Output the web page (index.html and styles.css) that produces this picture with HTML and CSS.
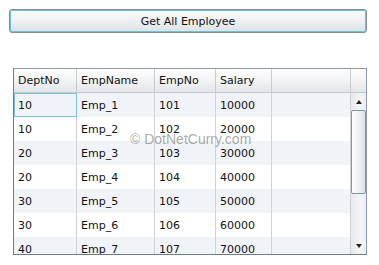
FILE: index.html
```html
<!DOCTYPE html>
<html>
	<head>
		<meta charset="utf-8" />
		<title>Employees</title>
		<link rel="stylesheet" href="styles.css">
	</head>
	<body>
		<div class="page">
			<button type="button" class="btnGet">Get All Employee</button>
			<div class="grid">
				<div class="head">
					<div class="hcell">DeptNo</div>
					<div class="hcell">EmpName</div>
					<div class="hcell">EmpNo</div>
					<div class="hcell">Salary</div>
					<div class="hcell"></div>
					<div class="hcell last"></div>
				</div>
				<div class="body">
					<div class="rows">
						<div class="row alt"><div class="cell focus">10</div><div class="cell">Emp_1</div><div class="cell">101</div><div class="cell">10000</div><div class="cell"></div></div>
						<div class="row"><div class="cell">10</div><div class="cell">Emp_2</div><div class="cell">102</div><div class="cell">20000</div><div class="cell"></div></div>
						<div class="row alt"><div class="cell">20</div><div class="cell">Emp_3</div><div class="cell">103</div><div class="cell">30000</div><div class="cell"></div></div>
						<div class="row"><div class="cell">20</div><div class="cell">Emp_4</div><div class="cell">104</div><div class="cell">40000</div><div class="cell"></div></div>
						<div class="row alt"><div class="cell">30</div><div class="cell">Emp_5</div><div class="cell">105</div><div class="cell">50000</div><div class="cell"></div></div>
						<div class="row"><div class="cell">30</div><div class="cell">Emp_6</div><div class="cell">106</div><div class="cell">60000</div><div class="cell"></div></div>
						<div class="row alt"><div class="cell">40</div><div class="cell">Emp_7</div><div class="cell">107</div><div class="cell">70000</div><div class="cell"></div></div>
					</div>
					<div class="scroll">
						<div class="arrow up"></div>
						<div class="track"><div class="thumb"></div></div>
						<div class="arrow down"></div>
					</div>
				</div>
				<div class="mark">© DotNetCurry.com</div>
			</div>
		</div>
	</body>
</html>
```

FILE: styles.css
```css
*,
*::before,
*::after{
	box-sizing: border-box;
}
body{
	margin: 0;
	font-family: "DejaVu Sans", Verdana, sans-serif;
	font-size: 11px;
	color: #111;
	background: #fff;
}
.page{
	padding: 9px 12px 0 9px;
	display: flex;
	flex-direction: column;
	align-items: flex-start;
}
.btnGet{
	width: 358px;
	height: 24px;
	padding: 0;
	font-family: inherit;
	font-size: 11px;
	color: #111;
	border: 1px solid #7d8e9c;
	border-radius: 3px;
	background: linear-gradient(#fbfcfc, #eef0f2 50%, #dde1e5);
	box-shadow: inset 0 0 0 1px #6cc3d5;
	cursor: pointer;
}
.grid{
	position: relative;
	margin: 35px 0 0 4px;
	width: 354px;
	height: 187px;
	border: 1px solid #8c98a4;
	border-left-color: #6f7a84;
	border-bottom-color: #6f7a84;
	display: flex;
	flex-direction: column;
	overflow: hidden;
}
.head,
.row{
	display: grid;
	grid-template-columns: 63px 78px 61px 56px 79px;
}
.head{
	grid-template-columns: 63px 78px 61px 56px 79px 15px;
	height: 24px;
	background: linear-gradient(#ffffff, #f3f4f5 45%, #e3e6e9);
	border-bottom: 1px solid #c4cad0;
}
.hcell{
	border-right: 1px solid #c9cdd1;
	padding-left: 4px;
	display: flex;
	align-items: center;
}
.hcell.last{
	border-right: none;
}
.body{
	flex: 1;
	display: flex;
	min-height: 0;
}
.rows{
	width: 337px;
	overflow: hidden;
}
.row{
	height: 24px;
	background: #fff;
}
.row.alt{
	background: #f0f3f8;
}
.cell{
	border-right: 1px solid #cfd3d7;
	padding-left: 4px;
	display: flex;
	align-items: center;
}
.cell.focus{
	border: 1px solid #78c4d3;
	padding-left: 3px;
}
.scroll{
	width: 15px;
	display: flex;
	flex-direction: column;
	background: linear-gradient(90deg, #e6e9ec, #f3f4f6 60%, #eceef1);
}
.arrow{
	height: 17px;
	display: flex;
	align-items: center;
	justify-content: center;
}
.arrow::before{
	content: "";
	border-left: 3px solid transparent;
	border-right: 3px solid transparent;
}
.arrow.up::before{
	border-bottom: 4px solid #222;
}
.arrow.down::before{
	border-top: 4px solid #222;
}
.track{
	flex: 1;
	padding-top: 0;
}
.thumb{
	height: 84px;
	border: 1px solid #8795a1;
	border-radius: 2px;
	background: linear-gradient(90deg, #fdfdfd, #f0f1f3 50%, #dde1e5);
}
.mark{
	position: absolute;
	left: 116px;
	top: 62px;
	font-family: "Liberation Sans", Arial, sans-serif;
	font-size: 14px;
	color: rgba(110, 110, 110, 0.6);
	pointer-events: none;
}
```
